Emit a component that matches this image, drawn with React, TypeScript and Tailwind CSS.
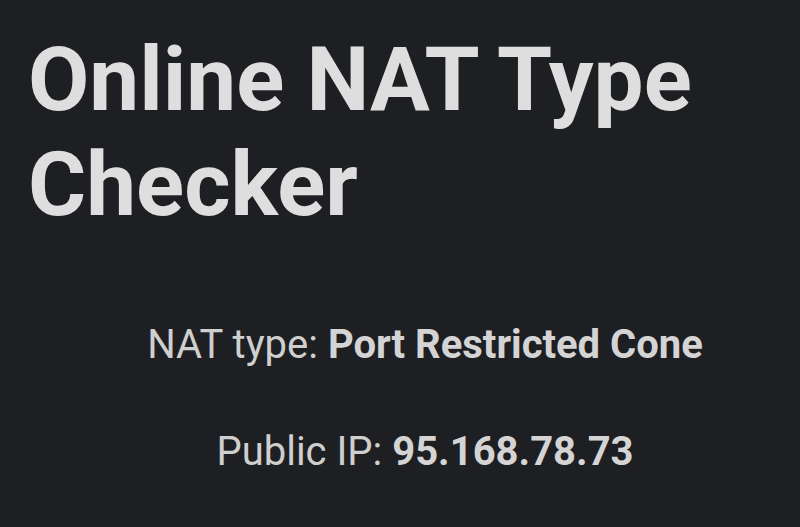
export default function App() {
  return (
    <div className="min-h-screen w-full bg-[#1e1f22] text-[#dedede] font-['Roboto',sans-serif] pl-[28px] pt-[27px]">
      <h1 className="text-[89px] leading-[105px] font-bold">Online NAT Type Checker</h1>
      <div className="mt-[84px] flex flex-col items-center pl-[22px] gap-[59px] text-[40px] leading-[48px] text-[#cfcfcf]">
        <p>
          NAT type: <span className="font-bold text-[#d4d4d4]">Port Restricted Cone</span>
        </p>
        <p>
          Public IP: <span className="font-bold text-[#d4d4d4]">95.168.78.73</span>
        </p>
      </div>
    </div>
  );
}
